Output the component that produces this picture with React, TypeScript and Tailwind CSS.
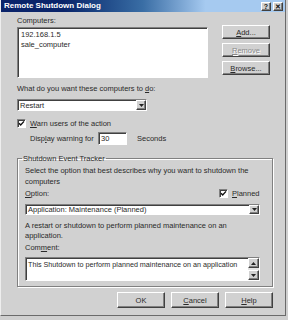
import type { ReactNode } from "react";

const raised =
  "border border-t-white border-l-white border-r-[#404040] border-b-[#404040] shadow-[inset_-1px_-1px_0_#808080] bg-[#d1d1d1]";
const sunken =
  "border border-t-[#808080] border-l-[#808080] border-r-white border-b-white shadow-[inset_1px_1px_0_#404040] bg-white";

function Button({ children, disabled = false, def = false, className = "" }: { children: ReactNode; disabled?: boolean; def?: boolean; className?: string }) {
  return (
    <div
      className={`${raised} ${def ? "shadow-[0_0_0_1px_#202020,inset_-1px_-1px_0_#808080]" : ""} flex items-center justify-center ${disabled ? "text-[#8a8a8a] [text-shadow:1px_1px_0_#fff]" : "text-[#2a2a2a]"} ${className}`}
    >
      {children}
    </div>
  );
}

function Arrow({ up = false, className = "" }: { up?: boolean; className?: string }) {
  return (
    <div className={`${raised} flex items-center justify-center ${className}`}>
      <svg width="5" height="3" viewBox="0 0 5 3">
        <path d={up ? "M2.5 0L5 3H0z" : "M0 0h5L2.5 3z"} fill="#222" />
      </svg>
    </div>
  );
}

function Check() {
  return (
    <div className={`${sunken} w-[9px] h-[9px] flex items-center justify-center`}>
      <svg width="7" height="7" viewBox="0 0 7 7">
        <path d="M1 3.2l1.7 1.8L6 1.4" stroke="#111" strokeWidth="1.4" fill="none" />
      </svg>
    </div>
  );
}

function Select({ value, className = "" }: { value: string; className?: string }) {
  return (
    <div className={`${sunken} flex items-center pl-[2px] ${className}`}>
      <span className="flex-1 text-[#2a2a2a]">{value}</span>
      <Arrow className="w-[10px] h-full" />
    </div>
  );
}

export default function App() {
  return (
    <div className="w-[288px] h-[320px] bg-[#cfcfcf] font-['Liberation_Sans',Arial,sans-serif] text-[7.5px] leading-[9px] text-[#2a2a2a]">
      <div className="w-[286px] h-[316px] bg-[#d1d1d1] border-l border-l-[#eeeeee] border-r border-r-[#6a6a6a] border-b border-b-[#6a6a6a] flex flex-col">
        {/* title bar */}
        <div className="h-[12px] shrink-0 flex items-center pl-[3px] pr-[2px] bg-linear-to-r from-[#0a246a] from-[22%] via-[#3a6ea5] via-[50%] to-[#a6caf0] to-[72%]">
          <span className="flex-1 text-white font-bold text-[8px] leading-[12px]">Remote Shutdown Dialog</span>
          <div className={`${raised} w-[10px] h-[9px] flex items-center justify-center text-[7px] font-bold leading-none text-[#111]`}>?</div>
          <div className={`${raised} w-[10px] h-[9px] ml-[2px] flex items-center justify-center text-[7px] font-bold leading-none text-[#111]`}>✕</div>
        </div>

        <div className="pl-[16px] flex flex-col">
          <div className="mt-[4px] h-[9px]">Computers:</div>
          <div className="flex">
            <div className={`${sunken} mt-[2px] w-[191px] h-[51px] px-[3px] pt-[2px] leading-[10px]`}>
              <div>192.168.1.5</div>
              <div>sale_computer</div>
            </div>
            <div className="ml-[14px] flex flex-col gap-[4px]">
              <Button className="w-[48px] h-[14px]">
                <span><u>A</u>dd...</span>
              </Button>
              <Button disabled className="w-[48px] h-[14px]">
                <span><u>R</u>emove</span>
              </Button>
              <Button className="w-[48px] h-[14px]">
                <span><u>B</u>rowse...</span>
              </Button>
            </div>
          </div>

          <div className="mt-[6px] h-[9px]">
            What do you want these computers to <u>d</u>o:
          </div>
          <Select value="Restart" className="mt-[6px] w-[130px] h-[12px]" />

          <div className="mt-[8px] h-[9px] flex items-center gap-[4px]">
            <Check />
            <span>
              <u>W</u>arn users of the action
            </span>
          </div>
          <div className="mt-[4px] h-[13px] flex items-center pl-[13px]">
            <span className="w-[68px]">
              Disp<u>l</u>ay warning for
            </span>
            <div className={`${sunken} w-[29px] h-[13px] pl-[2px] flex items-center`}>30</div>
            <span className="ml-[10px]">Seconds</span>
          </div>

          <fieldset className="mt-[9px] w-[256px] border border-[#808080] shadow-[1px_1px_0_#fff,inset_1px_1px_0_#fff] pl-[7px] pr-[11px] pb-[5px]">
            <legend className="ml-[-3px] px-[1px] leading-[9px]">Shutdown Event Tracker</legend>
            <p className="mt-[2px] leading-[11px]">
              Select the option that best describes why you want to shutdown the computers
            </p>
            <div className="mt-[2px] h-[9px] flex items-center">
              <span className="flex-1">
                <u>O</u>ption:
              </span>
              <Check />
              <span className="ml-[4px] w-[29px]">
                <u>P</u>lanned
              </span>
            </div>
            <Select value="Application: Maintenance (Planned)" className="mt-[6px] w-[235px] h-[11px]" />
            <p className="mt-[6px] leading-[10px]">
              A restart or shutdown to perform planned maintenance on an application.
            </p>
            <div className="mt-[2px] h-[9px]">
              Com<u>m</u>ent:
            </div>
            <div className={`${sunken} mt-[5px] w-[235px] h-[24px] flex`}>
              <span className="flex-1 pl-[2px] pt-[2px] text-[7.2px] whitespace-nowrap overflow-hidden">
                This Shutdown to perform planned maintenance on an application
              </span>
              <div className="w-[11px] ml-[2px] bg-[#e4e4e4] flex flex-col justify-between">
                <Arrow up className="w-[11px] h-[10px]" />
                <Arrow className="w-[11px] h-[10px]" />
              </div>
            </div>
          </fieldset>

          <div className="mt-[5px] w-[256px] flex justify-end gap-[6px]">
            <Button def className="w-[48px] h-[16px]">OK</Button>
            <Button className="w-[48px] h-[16px]">
              <span><u>C</u>ancel</span>
            </Button>
            <Button className="w-[48px] h-[16px]">
              <span><u>H</u>elp</span>
            </Button>
          </div>
        </div>
      </div>
    </div>
  );
}
